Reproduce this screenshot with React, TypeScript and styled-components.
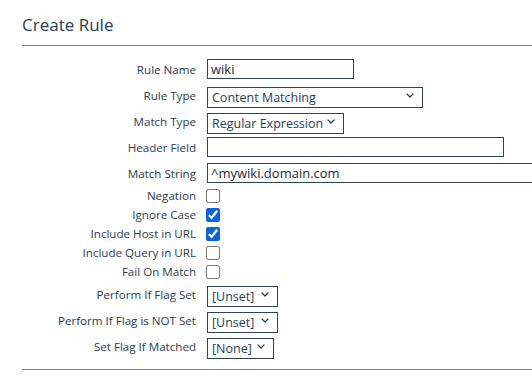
import React from "react";
import styled, { createGlobalStyle } from "styled-components";

const COLORS = {
    text: "#2b3d50",
    border: "#2f4256",
    rule: "#70849a",
    check: "#0c63d6",
};

const GlobalStyle = createGlobalStyle`
  html, body {
    margin: 0;
    padding: 0;
    background: #ffffff;
  }
  body {
    font-family: "Open Sans", "Noto Sans", sans-serif;
    color: ${COLORS.text};
    overflow: hidden;
  }
`;

type Field =
    | { kind: "text"; label: string; value: string; width: number }
    | { kind: "select"; label: string; value: string; width: number }
    | { kind: "check"; label: string; checked: boolean };

const FIELDS: Field[] = [
    { kind: "text", label: "Rule Name", value: "wiki", width: 147 },
    { kind: "select", label: "Rule Type", value: "Content Matching", width: 216 },
    { kind: "select", label: "Match Type", value: "Regular Expression", width: 137 },
    { kind: "text", label: "Header Field", value: "", width: 297 },
    { kind: "text", label: "Match String", value: "^mywiki.domain.com", width: 340 },
    { kind: "check", label: "Negation", checked: false },
    { kind: "check", label: "Ignore Case", checked: true },
    { kind: "check", label: "Include Host in URL", checked: true },
    { kind: "check", label: "Include Query in URL", checked: false },
    { kind: "check", label: "Fail On Match", checked: false },
    { kind: "select", label: "Perform If Flag Set", value: "[Unset]", width: 71 },
    { kind: "select", label: "Perform If Flag is NOT Set", value: "[Unset]", width: 71 },
    { kind: "select", label: "Set Flag If Matched", value: "[None]", width: 67 },
];

// small chevron drawn in place of the native select arrow
const Chevron = () => (
    <svg width="8" height="5" viewBox="0 0 8 5" fill="none">
        <path d="M1 1 L4 4 L7 1" stroke={COLORS.text} strokeWidth="1.2" strokeLinecap="round" strokeLinejoin="round" />
    </svg>
);

export default function App() {
    return (
        <Page>
            <GlobalStyle />
            <Title>Create Rule</Title>
            <Form>
                {FIELDS.map((field) => (
                    <Row key={field.label} $compact={field.kind === "check"}>
                        <Label>{field.label}</Label>
                        {field.kind === "text" && (
                            <TextInput type="text" defaultValue={field.value} $width={field.width} />
                        )}
                        {field.kind === "select" && (
                            <SelectWrap $width={field.width}>
                                <Select defaultValue={field.value}>
                                    <option>{field.value}</option>
                                </Select>
                                <Arrow>
                                    <Chevron />
                                </Arrow>
                            </SelectWrap>
                        )}
                        {field.kind === "check" && (
                            <Check type="checkbox" defaultChecked={field.checked} />
                        )}
                    </Row>
                ))}
            </Form>
            <Footer />
        </Page>
    );
}

const Page = styled.div`
    padding-left: 22px;
    width: 510px;
`;

const Title = styled.h1`
    margin: 0;
    padding: 14px 0 9px;
    font-size: 17px;
    line-height: 22px;
    font-weight: 400;
    color: ${COLORS.text};
    border-bottom: 1px solid ${COLORS.rule};
`;

const Form = styled.div`
    padding-top: 10px;
`;

const Row = styled.div<{ $compact: boolean }>`
    display: grid;
    grid-template-columns: 174px 1fr;
    column-gap: 10px;
    align-items: center;
    height: ${(p) => (p.$compact ? 19 : 26)}px;
`;

const Label = styled.label`
    text-align: right;
    font-size: 11.6px;
    white-space: nowrap;
    color: ${COLORS.text};
`;

const TextInput = styled.input<{ $width: number }>`
    box-sizing: border-box;
    width: ${(p) => p.$width}px;
    height: 20px;
    margin: 0 0 0 1px;
    padding: 0 3px;
    border: 1px solid ${COLORS.border};
    border-radius: 0;
    font-family: "Open Sans", "Noto Sans", sans-serif;
    font-size: 13px;
    color: #1e2a36;
    outline: none;
`;

const SelectWrap = styled.div<{ $width: number }>`
    position: relative;
    width: ${(p) => p.$width}px;
    height: 21px;
    margin-left: 1px;
`;

const Select = styled.select`
    appearance: none;
    box-sizing: border-box;
    width: 100%;
    height: 100%;
    margin: 0;
    padding: 0 20px 0 4px;
    border: 1px solid ${COLORS.border};
    border-radius: 0;
    background: #ffffff;
    font-family: "Open Sans", "Noto Sans", sans-serif;
    font-size: 12.5px;
    color: ${COLORS.text};
    outline: none;
`;

const Arrow = styled.span`
    position: absolute;
    right: 9px;
    top: 8px;
    display: flex;
    pointer-events: none;
`;

const Check = styled.input`
    width: 14px;
    height: 14px;
    margin: 0;
    accent-color: ${COLORS.check};
`;

const Footer = styled.div`
    margin-top: 10px;
    border-top: 1px solid ${COLORS.rule};
`;
